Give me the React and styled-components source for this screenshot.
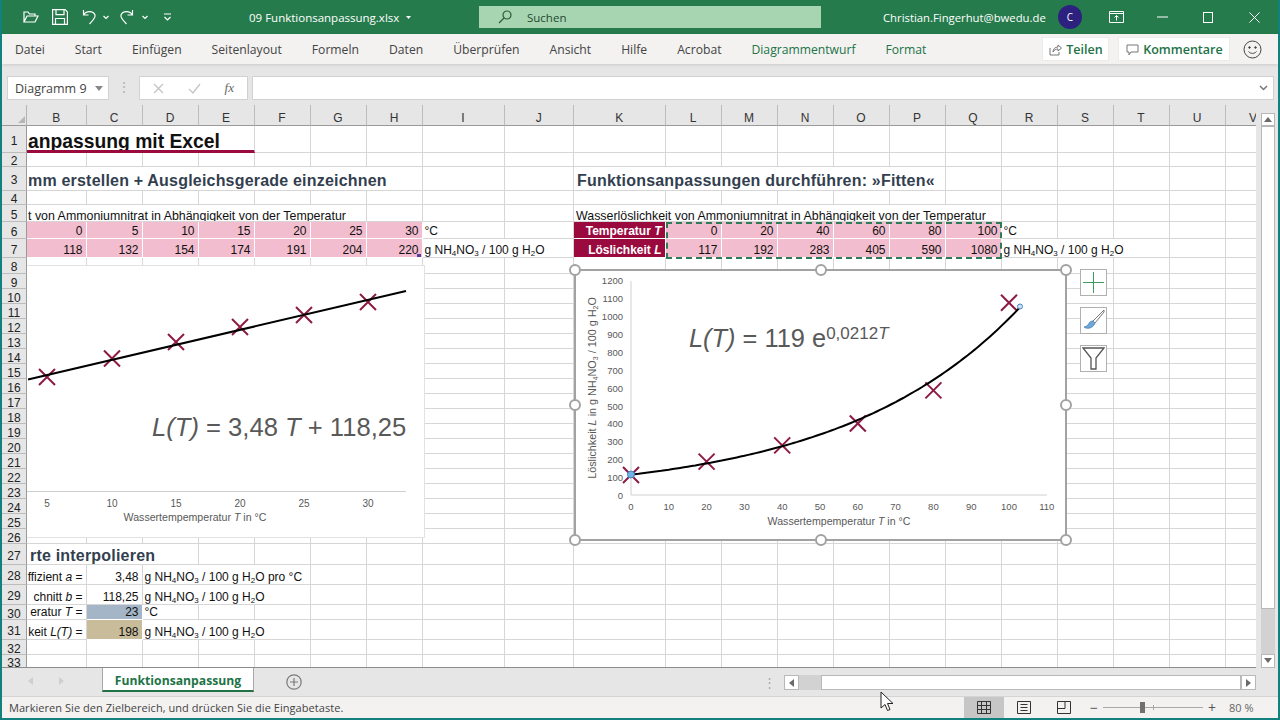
import React from 'react';
import styled, { createGlobalStyle } from 'styled-components';

const UI_FONT = '"Open Sans", "Noto Sans", sans-serif';
const CELL_FONT = '"Liberation Sans", Arial, sans-serif';
const GREEN = '#217346';
const MAROON = '#9b0a3e';
const PINK = '#f2bdcf';
const LINE = '#d6d6d6';

const Global = createGlobalStyle`
  html, body { margin: 0; padding: 0; background: #fff; }
  #root { width: 1280px; height: 720px; overflow: hidden; }
`;

const Window = styled.div`
  position: relative;
  box-sizing: border-box;
  width: 1280px;
  height: 720px;
  display: flex;
  flex-direction: column;
  border: solid #11807f;
  border-width: 0 2px 2px 2px;
  font-family: ${UI_FONT};
  overflow: hidden;
`;

/* title bar */
const TitleBar = styled.div`
  flex: none;
  height: 34px;
  display: flex;
  align-items: center;
  background: #267b4c;
  color: #fff;
  font-size: 12px;
  padding-left: 21px;
`;
const QatIcon = styled.svg`
  flex: none;
  margin-left: ${p => p.$gap || 0}px;
  fill: none;
  stroke: #fff;
  stroke-width: 1.2;
`;
const FileName = styled.div`
  flex: none;
  width: 170px;
  margin-left: 78px;
  display: flex;
  align-items: center;
  gap: 7px;
  white-space: nowrap;
  font-size: 11.5px;
`;
const SearchBox = styled.div`
  flex: none;
  width: 342px;
  height: 22px;
  margin-left: 60px;
  display: flex;
  align-items: center;
  gap: 15px;
  padding-left: 19px;
  box-sizing: border-box;
  background: #a7d5b2;
  color: #23492f;
  font-size: 11.5px;
`;
const UserMail = styled.div`
  flex: none;
  width: 164px;
  margin-left: 62px;
  white-space: nowrap;
  font-size: 11.3px;
`;
const Avatar = styled.div`
  flex: none;
  width: 24px;
  height: 24px;
  margin-left: 11px;
  margin-right: 11px;
  border-radius: 50%;
  background: #2d2180;
  display: flex;
  align-items: center;
  justify-content: center;
  font-size: 10px;
`;
const WinButton = styled.div`
  flex: none;
  width: 46px;
  display: flex;
  justify-content: center;
`;

/* ribbon tabs */
const Ribbon = styled.div`
  flex: none;
  height: 30px;
  display: flex;
  align-items: center;
  padding: 0 14px 0 13px;
  background: #f3f2f1;
  box-shadow: 0 1px 3px rgba(0, 0, 0, 0.12);
  position: relative;
`;
const RibbonTabs = styled.div`
  display: flex;
  gap: 30px;
`;
const RibbonTab = styled.span`
  font-size: 12.17px;
  white-space: nowrap;
  color: ${p => (p.$contextual ? GREEN : '#444')};
`;
const RibbonButton = styled.div`
  flex: none;
  height: 24px;
  box-sizing: border-box;
  width: ${p => p.$w}px;
  margin-left: ${p => p.$gap}px;
  display: flex;
  align-items: center;
  justify-content: center;
  gap: 4px;
  background: #fff;
  border: 1px solid #ebebeb;
  color: ${GREEN};
  font-size: 12.5px;
  font-weight: 600;
`;
const Smiley = styled.svg`
  flex: none;
  margin-left: 13px;
  fill: none;
  stroke: #444;
  stroke-width: 1;
`;

/* formula bar */
const FormulaBar = styled.div`
  flex: none;
  height: 41px;
  box-sizing: border-box;
  padding: 12px 4px 5px 5px;
  display: flex;
  background: #e6e6e6;
`;
const FieldBox = styled.div`
  box-sizing: border-box;
  height: 24px;
  background: #fff;
  border: 1px solid #d2d2d2;
  display: flex;
  align-items: center;
`;
const NameBox = styled(FieldBox)`
  width: 102px;
  justify-content: space-between;
  padding: 0 5px 0 7px;
  font-size: 12.5px;
  color: #444;
`;
const Grip = styled.div`
  width: 30px;
  color: #b4b4b4;
  font-size: 14px;
  text-align: center;
  line-height: 22px;
`;
const FnBox = styled(FieldBox)`
  width: 109px;
  margin-right: 4px;
  justify-content: space-between;
  padding: 0 13px;
`;
const FnLabel = styled.span`
  font: italic 13px "Liberation Serif", serif;
  color: #666;
`;
const FormulaInput = styled(FieldBox)`
  flex: 1;
  justify-content: flex-end;
  padding-right: 5px;
`;

/* sheet */
const SheetArea = styled.div`
  flex: none;
  height: 563px;
  display: flex;
  position: relative;
`;
const Sheet = styled.div`
  flex: none;
  width: 1254px;
  display: grid;
  grid-template-columns: ${p => p.$columns};
  grid-template-rows: ${p => p.$rows};
  overflow: hidden;
  background: #fff;
  border-bottom: 1px solid #8c8c8c;
  box-sizing: border-box;
  font-family: ${CELL_FONT};
`;
const Corner = styled.div`
  background: #e6e6e6;
  border-bottom: 1px solid #9a9a9a;
  border-right: 1px solid #b4b4b4;
  display: flex;
  align-items: flex-end;
  justify-content: flex-end;
  padding: 0 1px 2px 0;
`;
const ColHead = styled.div`
  background: #e6e6e6;
  border-bottom: 1px solid #9a9a9a;
  border-right: 1px solid #bcbcbc;
  text-align: center;
  font-size: 12px;
  line-height: 26px;
  color: #333;
`;
const RowHead = styled.div`
  background: #e6e6e6;
  border-right: 1px solid #9a9a9a;
  border-bottom: 1px solid #bcbcbc;
  box-sizing: border-box;
  padding-top: 3px;
  display: flex;
  align-items: center;
  justify-content: center;
  font-size: 12px;
  color: #222;
  overflow: hidden;
`;
const KIND_SIZE = { title: 19.3, section: 16, caption: 12.4 };
const KIND_DROP = { title: 7, section: 4, caption: 0 };
const Cell = styled.div`
  grid-column: span ${p => p.$span || 1};
  position: relative;
  box-sizing: border-box;
  min-width: 0;
  overflow: hidden;
  display: flex;
  align-items: ${p => (p.$kind && p.$kind !== 'caption' ? 'center' : 'flex-end')};
  justify-content: ${p => (p.$right ? 'flex-end' : 'flex-start')};
  padding: ${p => KIND_DROP[p.$kind] || 0}px ${p => (p.$right ? 3 : 0)}px 0 ${p => p.$indent ?? 2}px;
  white-space: nowrap;
  font-size: ${p => KIND_SIZE[p.$kind] || 12}px;
  line-height: ${p => (p.$kind === 'caption' ? '9px' : 'normal')};
  font-weight: ${p => ((p.$kind && p.$kind !== 'caption') || p.$bold ? 700 : 400)};
  letter-spacing: ${p => (p.$kind === 'section' ? 0.2 : 0)}px;
  color: ${p => p.$color || (p.$kind === 'section' ? '#333f4f' : '#111')};
  background: ${p => p.$fill || 'transparent'};
  border-right: 1px solid ${p => (p.$fill ? '#fff' : LINE)};
  border-bottom: ${p => (p.$rule ? `3px solid ${MAROON}` : `1px solid ${p.$fill ? '#fff' : LINE}`)};
`;
const Sub = styled.sub`
  font-size: 8px;
  line-height: 0;
  vertical-align: -2px;
`;
const FillHandle = styled.span`
  position: absolute;
  right: 1px;
  bottom: 0;
  width: 4px;
  height: 3px;
  background: #5a3ea6;
`;
const Marquee = styled.div`
  position: absolute;
  left: 664px;
  top: 117px;
  width: 336px;
  height: 37px;
  box-sizing: border-box;
  border: 2px dashed #2f7a57;
  pointer-events: none;
`;
const FlatChart = styled.div`
  position: absolute;
  left: 25px;
  top: 160px;
  width: 398px;
  height: 273px;
  box-sizing: border-box;
  background: #fff;
  border: solid #e2e2e2;
  border-width: 1px 1px 1px 0;
`;
const SelectedChart = styled.div`
  position: absolute;
  left: 572px;
  top: 164px;
  width: 493px;
  height: 272px;
  box-sizing: border-box;
  background: #fff;
  border: 2px solid #a2a2a2;
`;
const ChartSvg = styled.svg`
  position: absolute;
  left: 0;
  top: 0;
  overflow: visible;
  font-family: ${CELL_FONT};
`;
const Handle = styled.span`
  position: absolute;
  width: 12px;
  height: 12px;
  box-sizing: border-box;
  border-radius: 50%;
  background: #fff;
  border: 2px solid #a2a2a2;
  left: ${p => p.$x};
  top: ${p => p.$y};
  transform: translate(-50%, -50%);
`;
const ChartTools = styled.div`
  position: absolute;
  left: 1078px;
  top: 164px;
  display: flex;
  flex-direction: column;
  gap: 11px;
`;
const ChartTool = styled.div`
  width: 27px;
  height: 27px;
  box-sizing: border-box;
  background: #fff;
  border: 1px solid #b0b0b0;
  display: flex;
  align-items: center;
  justify-content: center;
`;
const AxisText = styled.text`
  fill: #595959;
  font-size: ${p => p.$size || 10}px;
  text-anchor: ${p => p.$anchor || 'middle'};
`;
const Equation = styled.text`
  fill: #595959;
  font-size: ${p => p.$size || 25.6}px;
`;

/* vertical scrollbar */
const VScroll = styled.div`
  flex: 1;
  display: flex;
  flex-direction: column;
  padding: 8px 2px 0 5px;
  background: #e6e6e6;
`;
const ScrollBtn = styled.div`
  flex: none;
  box-sizing: border-box;
  width: ${p => p.$w || 14}px;
  height: ${p => p.$h || 14}px;
  background: #fff;
  border: 1px solid #b8b8b8;
  display: flex;
  align-items: center;
  justify-content: center;
`;
const VThumb = styled.div`
  flex: none;
  height: 483px;
  width: 14px;
  box-sizing: border-box;
  background: #fff;
  border: 1px solid #b8b8b8;
`;
const VTrack = styled.div`
  flex: 1;
  width: 14px;
  background: #d2d2d2;
`;

/* sheet tabs */
const TabBar = styled.div`
  flex: none;
  height: 28px;
  display: flex;
  background: #e6e6e6;
`;
const TabNav = styled.div`
  flex: none;
  width: 100px;
  display: flex;
  align-items: center;
  gap: 24px;
  padding-left: 26px;
  box-sizing: border-box;
  height: 26px;
`;
const SheetTab = styled.div`
  flex: none;
  width: 152px;
  height: 24px;
  box-sizing: border-box;
  background: #fff;
  border: solid #a8a8a8;
  border-width: 0 1px;
  border-bottom: 2px solid ${GREEN};
  color: ${GREEN};
  font-size: 12.2px;
  font-weight: 700;
  text-align: center;
  line-height: 26px;
`;
const AddSheet = styled.svg`
  flex: none;
  margin: 6px 0 0 32px;
  fill: none;
  stroke: #7a7a7a;
`;
const HScroll = styled.div`
  flex: none;
  display: flex;
  align-items: center;
  height: 15px;
  margin: 7px 0 0 460px;
`;
const Dots = styled.span`
  width: 14px;
  margin-right: 8px;
  color: #aaa;
  font-size: 13px;
  line-height: 15px;
  text-align: center;
`;
const HTrack = styled.div`
  width: 22px;
  height: 15px;
  background: #d2d2d2;
`;
const HThumb = styled.div`
  width: 420px;
  height: 15px;
  box-sizing: border-box;
  background: #fff;
  border: 1px solid #b8b8b8;
`;

/* status bar */
const StatusBar = styled.div`
  flex: 1;
  display: flex;
  align-items: center;
  background: #f3f2f1;
  border-top: 1px solid #d4d4d4;
  padding-left: 7px;
  color: #444;
  font-size: 11px;
  letter-spacing: 0.05px;
`;
const StatusText = styled.div`
  flex: none;
  width: 955px;
  white-space: nowrap;
`;
const ViewButton = styled.div`
  flex: none;
  width: 40px;
  align-self: stretch;
  display: flex;
  align-items: center;
  justify-content: center;
  background: ${p => (p.$active ? '#c6c6c6' : 'transparent')};
`;
const ZoomSlider = styled.div`
  flex: none;
  position: relative;
  width: 100px;
  height: 1px;
  margin: 0 2px;
  background: #a8a8a8;
`;
const ZoomKnob = styled.span`
  position: absolute;
  left: 37px;
  top: -5px;
  width: 5px;
  height: 11px;
  background: #707070;
`;
const ZoomTick = styled.span`
  position: absolute;
  left: 50px;
  top: -2px;
  width: 1px;
  height: 5px;
  background: #a8a8a8;
`;
const ZoomSign = styled.span`
  flex: none;
  font-size: 14px;
  width: 14px;
  margin-left: ${p => p.$gap || 0}px;
  text-align: center;
  color: #555;
`;
const ZoomValue = styled.span`
  flex: none;
  margin-left: 10px;
  color: #666;
`;
const Pointer = styled.svg`
  position: absolute;
  left: 878px;
  top: 691px;
  pointer-events: none;
`;

const COLS = [['B', 59.5], ['C', 56], ['D', 56], ['E', 56], ['F', 56], ['G', 56], ['H', 56], ['I', 82], ['J', 69.5], ['K', 91.5],
  ['L', 56], ['M', 56], ['N', 56], ['O', 56], ['P', 56], ['Q', 56], ['R', 56], ['S', 56], ['T', 56], ['U', 56], ['V', 56]];
const ROW_HEIGHTS = [27, 14, 24, 14, 17, 17, 19, 16, ...Array(18).fill(15), 21, 20, 20, 15, 20, 15, 13];

const Unit = ({ tail }) => <span>g NH<Sub>4</Sub>NO<Sub>3</Sub> / 100 g H<Sub>2</Sub>O{tail}</span>;
const pink = (cols, values) => Object.fromEntries(cols.map((c, i) => [c, { text: values[i], right: true, fill: PINK }]));

const CELLS = {
  1: { B: { text: 'anpassung mit Excel', span: 4, kind: 'title', rule: true, indent: 1 } },
  3: {
    B: { text: 'mm erstellen + Ausgleichsgerade einzeichnen', span: 7, kind: 'section', indent: 1 },
    K: { text: 'Funktionsanpassungen durchführen: »Fitten«', span: 6, kind: 'section', indent: 3 },
  },
  5: {
    B: { text: 't von Ammoniumnitrat in Abhängigkeit von der Temperatur', span: 6, indent: 1, kind: 'caption' },
    K: { text: 'Wasserlöslichkeit von Ammoniumnitrat in Abhängigkeit von der Temperatur', span: 7, kind: 'caption' },
  },
  6: {
    ...pink(['B', 'C', 'D', 'E', 'F', 'G', 'H'], [0, 5, 10, 15, 20, 25, 30]),
    I: { text: '°C' },
    K: { text: <>Temperatur <i>T</i></>, right: true, fill: MAROON, color: '#fff', bold: true },
    ...pink(['L', 'M', 'N', 'O', 'P', 'Q'], [0, 20, 40, 60, 80, 100]),
    R: { text: '°C' },
  },
  7: {
    ...pink(['B', 'C', 'D', 'E', 'F', 'G', 'H'], [118, 132, 154, 174, 191, 204, 220]),
    I: { text: <Unit />, span: 2 },
    K: { text: <>Löslichkeit <i>L</i></>, right: true, fill: MAROON, color: '#fff', bold: true },
    ...pink(['L', 'M', 'N', 'O', 'P', 'Q'], [117, 192, 283, 405, 590, 1080]),
    R: { text: <Unit />, span: 3 },
  },
  27: { B: { text: 'rte interpolieren', span: 3, kind: 'section', indent: 3 } },
  28: {
    B: { text: <>ffizient <i>a</i> =</>, right: true },
    C: { text: '3,48', right: true },
    D: { text: <Unit tail=" pro °C" />, span: 3 },
  },
  29: {
    B: { text: <>chnitt <i>b</i> =</>, right: true },
    C: { text: '118,25', right: true },
    D: { text: <Unit />, span: 3 },
  },
  30: {
    B: { text: <>eratur <i>T</i> =</>, right: true },
    C: { text: '23', right: true, fill: '#a3b5c6' },
    D: { text: '°C' },
  },
  31: {
    B: { text: <>keit <i>L(T)</i> =</>, right: true },
    C: { text: '198', right: true, fill: '#c9bc9a' },
    D: { text: <Unit />, span: 3 },
  },
};

const renderRow = (rowNum) => {
  const out = [];
  const data = CELLS[rowNum] || {};
  let i = 0;
  while (i < COLS.length) {
    const col = COLS[i][0];
    const c = data[col] || {};
    out.push(
      <Cell key={col + rowNum} $span={c.span} $right={c.right} $fill={c.fill} $color={c.color} $bold={c.bold}
        $kind={c.kind} $rule={c.rule} $indent={c.indent}>
        {c.text !== undefined && <span>{c.text}</span>}
        {col === 'H' && rowNum === 7 && <FillHandle />}
      </Cell>
    );
    i += c.span || 1;
  }
  return out;
};

const Cross = ({ x, y }) => (
  <path d={`M${x - 8} ${y - 8}L${x + 8} ${y + 8}M${x + 8} ${y - 8}L${x - 8} ${y + 8}`} stroke="#8c1a45" strokeWidth="2" fill="none" />
);

const FlatChartBody = () => (
  <ChartSvg width="397" height="271" viewBox="27 266 397 271">
    <line x1="27" y1="491.5" x2="406" y2="491.5" stroke="#cfcfcf" />
    {[[47, 377], [112, 358.5], [176, 342], [240, 327], [304, 315], [368, 302]].map(([x, y]) => <Cross key={x} x={x} y={y} />)}
    <line x1="28" y1="379.5" x2="406" y2="291" stroke="#000" strokeWidth="2" />
    {[[47, 5], [112, 10], [176, 15], [240, 20], [304, 25], [368, 30]].map(([x, v]) => (
      <AxisText key={v} x={x} y={507}>{v}</AxisText>
    ))}
    <AxisText x="195" y="521" $size="10.6">Wassertempemperatur <tspan fontStyle="italic">T</tspan> in °C</AxisText>
    <Equation x="152" y="436">
      <tspan fontStyle="italic">L(T)</tspan> = 3,48 <tspan fontStyle="italic">T</tspan> + 118,25
    </Equation>
  </ChartSvg>
);

const toX = (t) => 631 + t * 3.78;
const toY = (v) => 496 - v * 0.179;
const CURVE = Array.from({ length: 104 }, (_, t) => `${t ? 'L' : 'M'}${toX(t).toFixed(1)} ${toY(119 * Math.exp(0.0212 * t)).toFixed(1)}`).join('');

const FitChartBody = () => (
  <ChartSvg width="489" height="268" viewBox="576 271 489 268">
    <path d="M631 281V495H1047" fill="none" stroke="#d0d0d0" />
    {[0, 100, 200, 300, 400, 500, 600, 700, 800, 900, 1000, 1100, 1200].map(v => (
      <AxisText key={v} x="623" y={toY(v) + 3} $size="9.5" $anchor="end">{v}</AxisText>
    ))}
    {[0, 10, 20, 30, 40, 50, 60, 70, 80, 90, 100, 110].map(t => (
      <AxisText key={t} x={toX(t)} y="510" $size="9.5">{t}</AxisText>
    ))}
    <AxisText x="839" y="525" $size="10.6">Wassertempemperatur <tspan fontStyle="italic">T</tspan> in °C</AxisText>
    <AxisText x="0" y="0" $size="10.8" transform="translate(596 388) rotate(-90)">
      Löslichkeit <tspan fontStyle="italic">L</tspan> in g NH<tspan fontSize="7" dy="2">4</tspan>
      <tspan dy="-2">NO</tspan><tspan fontSize="7" dy="2">3</tspan><tspan dy="-2"> / 100 g H</tspan>
      <tspan fontSize="7" dy="2">2</tspan><tspan dy="-2">O</tspan>
    </AxisText>
    {[[0, 117], [20, 192], [40, 283], [60, 405], [80, 590], [100, 1080]].map(([t, v]) => <Cross key={t} x={toX(t)} y={toY(v)} />)}
    <path d={CURVE} fill="none" stroke="#000" strokeWidth="2" />
    <circle cx="631" cy="474.5" r="3.5" fill="#6fb3e0" stroke="#3f86c4" />
    <circle cx="1020" cy="306.5" r="2.5" fill="#cfe3f5" stroke="#3f86c4" />
    <Equation x="689" y="347" $size="25.4">
      <tspan fontStyle="italic">L(T)</tspan> = 119 e
      <tspan fontSize="17" dy="-8">0,0212</tspan><tspan fontSize="17" fontStyle="italic">T</tspan>
    </Equation>
  </ChartSvg>
);

const Tri = ({ dir }) => {
  const paths = { up: 'M4 1L8 6H0Z', down: 'M0 1H8L4 6Z', left: 'M6 0V8L1 4Z', right: 'M1 0V8L6 4Z' };
  return <svg width="8" height="8" viewBox="0 0 8 8"><path d={paths[dir]} fill="#6a6a6a" /></svg>;
};

const TABS = ['Datei', 'Start', 'Einfügen', 'Seitenlayout', 'Formeln', 'Daten', 'Überprüfen', 'Ansicht', 'Hilfe', 'Acrobat'];

export default function App() {
  const columns = `25px ${COLS.map(c => c[1] + 'px').join(' ')}`;
  const rows = `21px ${ROW_HEIGHTS.map(h => h + 'px').join(' ')}`;
  return (
    <Window>
      <Global />
      <TitleBar>
        <QatIcon width="16" height="16" viewBox="0 0 16 16"><path d="M1 13V3h4l1.5 2H12v2M1 13l3-6h11l-3 6z" /></QatIcon>
        <QatIcon $gap={13} width="16" height="16" viewBox="0 0 16 16"><path d="M.6.6h12.5l2.3 2.3v12.5H.6zM4 .6v5h8v-5M3.5 15.4V9.5h9v5.9" /></QatIcon>
        <QatIcon $gap={13} width="16" height="16" viewBox="0 0 16 16"><path d="M2.5 1v5h5M2.5 6C5 1.5 12.5 1.500 14 6c.8 3-2.500 5.500-5.500 9" /></QatIcon>
        <QatIcon $gap={6} width="6" height="16" viewBox="0 0 6 16"><path d="M.5 7l2.500 2.500L5.500 7" /></QatIcon>
        <QatIcon $gap={10} width="16" height="16" viewBox="0 0 16 16"><path d="M13.500 1v5h-5M13.500 6C11 1.500 3.500 1.500 2 6c-.8 3 2.500 5.500 5.500 9" /></QatIcon>
        <QatIcon $gap={7} width="6" height="16" viewBox="0 0 6 16"><path d="M.5 7l2.500 2.500L5.500 7" /></QatIcon>
        <QatIcon $gap={16} width="7" height="16" viewBox="0 0 7 16"><path d="M0 5h7M.5 8l3 3 3-3" /></QatIcon>
        <FileName>09 Funktionsanpassung.xlsx
          <svg width="5" height="3" viewBox="0 0 7 4"><path d="M0 0h7L3.500 4z" fill="#fff" /></svg>
        </FileName>
        <SearchBox>
          <svg width="14" height="14" viewBox="0 0 14 14" fill="none" stroke="#2c5a3c" strokeWidth="1.200"><circle cx="9" cy="5" r="4" /><path d="M6 8l-5 5" /></svg>
          Suchen
        </SearchBox>
        <UserMail>Christian.Fingerhut@bwedu.de</UserMail>
        <Avatar>C</Avatar>
        <WinButton>
          <svg width="15" height="12" viewBox="0 0 15 12" fill="none" stroke="#fff"><path d="M.5.500h14v11H.5zM.5 2.500h14M7.500 9.500V4.500M5.500 6.500l2-2 2 2" /></svg>
        </WinButton>
        <WinButton><svg width="11" height="2" viewBox="0 0 11 2"><path d="M0 1h11" stroke="#fff" /></svg></WinButton>
        <WinButton><svg width="10" height="11" viewBox="0 0 10 11" fill="none" stroke="#fff"><rect x=".5" y=".5" width="9" height="10" /></svg></WinButton>
        <WinButton><svg width="11" height="11" viewBox="0 0 11 11" stroke="#fff"><path d="M.5.500l10 10M10.500.500l-10 10" /></svg></WinButton>
      </TitleBar>

      <Ribbon>
        <RibbonTabs>
          {TABS.map(t => <RibbonTab key={t}>{t}</RibbonTab>)}
          <RibbonTab $contextual>Diagrammentwurf</RibbonTab>
          <RibbonTab $contextual>Format</RibbonTab>
        </RibbonTabs>
        <RibbonButton $w={67} $gap={116}>
          <svg width="13" height="13" viewBox="0 0 13 13" fill="none" stroke="#777"><path d="M1 5v7h9V9M4 9c0-3 2-5 5-5V2l3.500 3L9 8V6C7 6 5 7 4 9z" /></svg>
          Teilen
        </RibbonButton>
        <RibbonButton $w={112} $gap={9}>
          <svg width="13" height="13" viewBox="0 0 13 13" fill="none" stroke="#777"><path d="M1 2h11v7H5l-2 3V9H1z" /></svg>
          Kommentare
        </RibbonButton>
        <Smiley width="19" height="19" viewBox="0 0 19 19">
          <circle cx="9.500" cy="9.500" r="8.500" />
          <circle cx="6.500" cy="7.500" r=".8" fill="#444" /><circle cx="12.500" cy="7.500" r=".8" fill="#444" />
          <path d="M5.500 11.500c2 2.500 6 2.500 8 0" />
        </Smiley>
      </Ribbon>

      <FormulaBar>
        <NameBox>Diagramm 9 <svg width="8" height="5" viewBox="0 0 8 5"><path d="M0 0h8L4 5z" fill="#888" /></svg></NameBox>
        <Grip>⋮</Grip>
        <FnBox>
          <svg width="11" height="11" viewBox="0 0 11 11" stroke="#c4c4c4" strokeWidth="1.300"><path d="M1 1l9 9M10 1l-9 9" /></svg>
          <svg width="13" height="11" viewBox="0 0 13 11" fill="none" stroke="#c4c4c4" strokeWidth="1.300"><path d="M1 6l4 4 7-9" /></svg>
          <FnLabel>fx</FnLabel>
        </FnBox>
        <FormulaInput>
          <svg width="9" height="6" viewBox="0 0 9 6" fill="none" stroke="#777" strokeWidth="1.500"><path d="M1 1l3.500 3.500L8 1" /></svg>
        </FormulaInput>
      </FormulaBar>

      <SheetArea>
        <Sheet $columns={columns} $rows={rows}>
          <Corner><svg width="7" height="7" viewBox="0 0 7 7"><path d="M7 0v7H0z" fill="#b6b6b6" /></svg></Corner>
          {COLS.map(([c]) => <ColHead key={c}>{c}</ColHead>)}
          {ROW_HEIGHTS.map((_, r) => (
            <React.Fragment key={r}>
              <RowHead>{r + 1}</RowHead>
              {renderRow(r + 1)}
            </React.Fragment>
          ))}
        </Sheet>
        <VScroll>
          <ScrollBtn $h={13}><Tri dir="up" /></ScrollBtn>
          <VThumb />
          <VTrack />
          <ScrollBtn><Tri dir="down" /></ScrollBtn>
        </VScroll>

        <Marquee />
        <FlatChart><FlatChartBody /></FlatChart>
        <SelectedChart>
          <FitChartBody />
          <Handle $x="-1px" $y="-1px" />
          <Handle $x="50%" $y="-1px" />
          <Handle $x="calc(100% + 1px)" $y="-1px" />
          <Handle $x="-1px" $y="50%" />
          <Handle $x="calc(100% + 1px)" $y="50%" />
          <Handle $x="-1px" $y="calc(100% + 1px)" />
          <Handle $x="50%" $y="calc(100% + 1px)" />
          <Handle $x="calc(100% + 1px)" $y="calc(100% + 1px)" />
        </SelectedChart>
        <ChartTools>
          <ChartTool>
            <svg width="21" height="21" viewBox="0 0 21 21" stroke="#3f9b5f"><path d="M10.500 0v21M0 10.500h21" /></svg>
          </ChartTool>
          <ChartTool>
            <svg width="23" height="23" viewBox="0 0 23 23">
              <path d="M22 1L11 12l2 2L22 3z" fill="#fff" stroke="#777" />
              <path d="M11 12c-3 0-4 2-5 4-1 1-3 2-4 2 2 2 9 2 11-4z" fill="#6ea7d8" stroke="#5b8fbd" />
            </svg>
          </ChartTool>
          <ChartTool>
            <svg width="23" height="25" viewBox="0 0 23 25" fill="none" stroke="#555" strokeWidth="1.300"><path d="M1 2h21l-8 10v11H9V12z" /></svg>
          </ChartTool>
        </ChartTools>
      </SheetArea>

      <TabBar>
        <TabNav>
          <svg width="6" height="8" viewBox="0 0 6 8"><path d="M5 0v8L0 4z" fill="#cfcfcf" /></svg>
          <svg width="6" height="8" viewBox="0 0 6 8"><path d="M1 0v8l5-4z" fill="#cfcfcf" /></svg>
        </TabNav>
        <SheetTab>Funktionsanpassung</SheetTab>
        <AddSheet width="16" height="16" viewBox="0 0 16 16" strokeWidth="1.200">
          <circle cx="8" cy="8" r="7.200" /><path d="M8 4v8M4 8h8" />
        </AddSheet>
        <HScroll>
          <Dots>⋮</Dots>
          <ScrollBtn $w={15} $h={15}><Tri dir="left" /></ScrollBtn>
          <HTrack />
          <HThumb />
          <ScrollBtn $w={15} $h={15}><Tri dir="right" /></ScrollBtn>
        </HScroll>
      </TabBar>

      <StatusBar>
        <StatusText>Markieren Sie den Zielbereich, und drücken Sie die Eingabetaste.</StatusText>
        <ViewButton $active>
          <svg width="14" height="13" viewBox="0 0 14 13" fill="none" stroke="#333"><path d="M.5.500h13v12H.5zM.5 4.500h13M.5 8.500h13M4.500.500v12M9.500.500v12" /></svg>
        </ViewButton>
        <ViewButton>
          <svg width="14" height="13" viewBox="0 0 14 13" fill="none" stroke="#333"><path d="M.5.500h13v12H.5zM3.500 3.500h7M3.500 6.500h7M3.500 9.500h7" /></svg>
        </ViewButton>
        <ViewButton>
          <svg width="14" height="13" viewBox="0 0 14 13" fill="none" stroke="#333"><path d="M.5.500h13v12H.5zM.5 7.500h7.500V.500" /></svg>
        </ViewButton>
        <ZoomSign $gap={3}>−</ZoomSign>
        <ZoomSlider><ZoomKnob /><ZoomTick /></ZoomSlider>
        <ZoomSign>+</ZoomSign>
        <ZoomValue>80 %</ZoomValue>
      </StatusBar>

      <Pointer width="14" height="21" viewBox="0 0 14 21">
        <path d="M1 1v16l4-3.500 2.500 6 2.500-1-2.500-6H13z" fill="#fff" stroke="#222" />
      </Pointer>
    </Window>
  );
}
